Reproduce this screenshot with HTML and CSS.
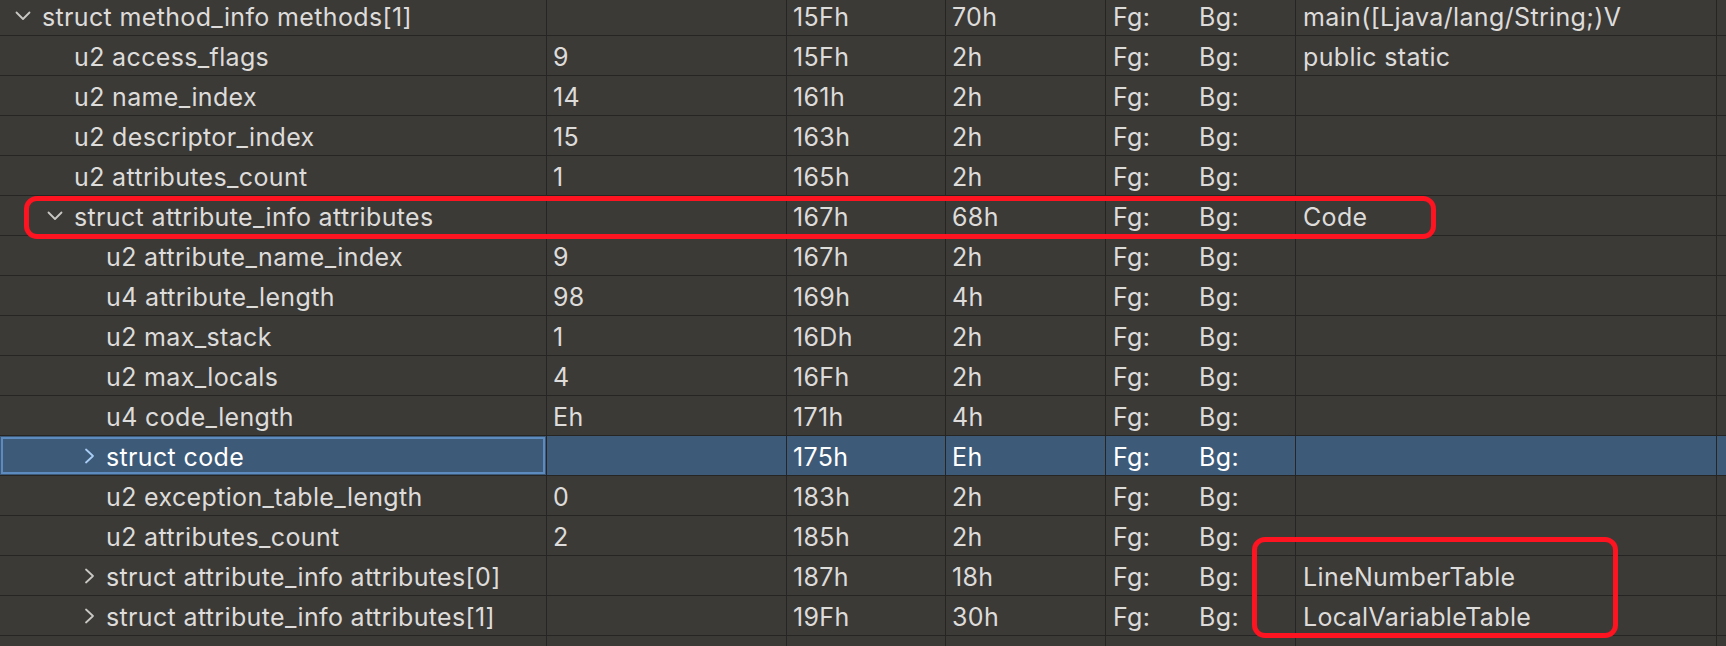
FILE: index.html
```html
<!DOCTYPE html>
<html>
<head>
<meta charset="utf-8">
<link rel="stylesheet" href="styles.css">
</head>
<body>
<div class="view">
  <div class="table">
    <div class="row">
      <div class="c name l0"><svg class="chev" viewBox="0 0 16 16"><path d="M1.5 4.5 L8 11 L14.5 4.5"/></svg><span>struct method_info methods[1]</span></div>
      <div class="c val"></div><div class="c off">15Fh</div><div class="c size">70h</div><div class="c fg">Fg:</div><div class="c bg">Bg:</div><div class="c cmt">main([Ljava/lang/String;)V</div><div class="c rest"></div>
    </div>
    <div class="row">
      <div class="c name l1"><i class="nochev"></i><span>u2 access_flags</span></div>
      <div class="c val">9</div><div class="c off">15Fh</div><div class="c size">2h</div><div class="c fg">Fg:</div><div class="c bg">Bg:</div><div class="c cmt">public static</div><div class="c rest"></div>
    </div>
    <div class="row">
      <div class="c name l1"><i class="nochev"></i><span>u2 name_index</span></div>
      <div class="c val">14</div><div class="c off">161h</div><div class="c size">2h</div><div class="c fg">Fg:</div><div class="c bg">Bg:</div><div class="c cmt"></div><div class="c rest"></div>
    </div>
    <div class="row">
      <div class="c name l1"><i class="nochev"></i><span>u2 descriptor_index</span></div>
      <div class="c val">15</div><div class="c off">163h</div><div class="c size">2h</div><div class="c fg">Fg:</div><div class="c bg">Bg:</div><div class="c cmt"></div><div class="c rest"></div>
    </div>
    <div class="row">
      <div class="c name l1"><i class="nochev"></i><span>u2 attributes_count</span></div>
      <div class="c val">1</div><div class="c off">165h</div><div class="c size">2h</div><div class="c fg">Fg:</div><div class="c bg">Bg:</div><div class="c cmt"></div><div class="c rest"></div>
    </div>
    <div class="row">
      <div class="c name l1"><svg class="chev" viewBox="0 0 16 16"><path d="M1.5 4.5 L8 11 L14.5 4.5"/></svg><span>struct attribute_info attributes</span></div>
      <div class="c val"></div><div class="c off">167h</div><div class="c size">68h</div><div class="c fg">Fg:</div><div class="c bg">Bg:</div><div class="c cmt">Code</div><div class="c rest"></div>
    </div>
    <div class="row">
      <div class="c name l2"><i class="nochev"></i><span>u2 attribute_name_index</span></div>
      <div class="c val">9</div><div class="c off">167h</div><div class="c size">2h</div><div class="c fg">Fg:</div><div class="c bg">Bg:</div><div class="c cmt"></div><div class="c rest"></div>
    </div>
    <div class="row">
      <div class="c name l2"><i class="nochev"></i><span>u4 attribute_length</span></div>
      <div class="c val">98</div><div class="c off">169h</div><div class="c size">4h</div><div class="c fg">Fg:</div><div class="c bg">Bg:</div><div class="c cmt"></div><div class="c rest"></div>
    </div>
    <div class="row">
      <div class="c name l2"><i class="nochev"></i><span>u2 max_stack</span></div>
      <div class="c val">1</div><div class="c off">16Dh</div><div class="c size">2h</div><div class="c fg">Fg:</div><div class="c bg">Bg:</div><div class="c cmt"></div><div class="c rest"></div>
    </div>
    <div class="row">
      <div class="c name l2"><i class="nochev"></i><span>u2 max_locals</span></div>
      <div class="c val">4</div><div class="c off">16Fh</div><div class="c size">2h</div><div class="c fg">Fg:</div><div class="c bg">Bg:</div><div class="c cmt"></div><div class="c rest"></div>
    </div>
    <div class="row">
      <div class="c name l2"><i class="nochev"></i><span>u4 code_length</span></div>
      <div class="c val">Eh</div><div class="c off">171h</div><div class="c size">4h</div><div class="c fg">Fg:</div><div class="c bg">Bg:</div><div class="c cmt"></div><div class="c rest"></div>
    </div>
    <div class="row selected">
      <div class="c name l2 focus"><svg class="chev right" viewBox="0 0 16 16"><path d="M7 1.5 L14 8 L7 14.5"/></svg><span>struct code</span></div>
      <div class="c val"></div><div class="c off">175h</div><div class="c size">Eh</div><div class="c fg">Fg:</div><div class="c bg">Bg:</div><div class="c cmt"></div><div class="c rest"></div>
    </div>
    <div class="row">
      <div class="c name l2"><i class="nochev"></i><span>u2 exception_table_length</span></div>
      <div class="c val">0</div><div class="c off">183h</div><div class="c size">2h</div><div class="c fg">Fg:</div><div class="c bg">Bg:</div><div class="c cmt"></div><div class="c rest"></div>
    </div>
    <div class="row">
      <div class="c name l2"><i class="nochev"></i><span>u2 attributes_count</span></div>
      <div class="c val">2</div><div class="c off">185h</div><div class="c size">2h</div><div class="c fg">Fg:</div><div class="c bg">Bg:</div><div class="c cmt"></div><div class="c rest"></div>
    </div>
    <div class="row">
      <div class="c name l2"><svg class="chev" viewBox="0 0 16 16"><path d="M7 1.5 L14 8 L7 14.5"/></svg><span>struct attribute_info attributes[0]</span></div>
      <div class="c val"></div><div class="c off">187h</div><div class="c size">18h</div><div class="c fg">Fg:</div><div class="c bg">Bg:</div><div class="c cmt">LineNumberTable</div><div class="c rest"></div>
    </div>
    <div class="row">
      <div class="c name l2"><svg class="chev" viewBox="0 0 16 16"><path d="M7 1.5 L14 8 L7 14.5"/></svg><span>struct attribute_info attributes[1]</span></div>
      <div class="c val"></div><div class="c off">19Fh</div><div class="c size">30h</div><div class="c fg">Fg:</div><div class="c bg">Bg:</div><div class="c cmt">LocalVariableTable</div><div class="c rest"></div>
    </div>
    <div class="row">
      <div class="c name"></div><div class="c val"></div><div class="c off"></div><div class="c size"></div><div class="c fg"></div><div class="c bg"></div><div class="c cmt"></div><div class="c rest"></div>
    </div>
  </div>
  <div class="mark mark-code"></div>
  <div class="mark mark-tables"></div>
</div>
</body>
</html>
```

FILE: styles.css
```css
html, body {
  margin: 0;
  padding: 0;
  background: #3c3a37;
  overflow: hidden;
}
.view {
  position: relative;
  width: 1726px;
  height: 646px;
  overflow: hidden;
  font-family: Inter, "Noto Sans", "Liberation Sans", sans-serif;
  font-size: 25px;
  letter-spacing: 0.35px;
  color: #dddcda;
}
.table {
  margin-top: -4px;
}
.row {
  display: grid;
  grid-template-columns: 547px 240px 159px 160px 84px 106px 421px 1fr;
  height: 40px;
  border-bottom: 1px solid #262523;
  box-sizing: border-box;
}
.row:last-child { border-bottom: none; }
.c {
  display: flex;
  align-items: center;
  box-sizing: border-box;
  border-right: 1px solid #262523;
  padding-left: 6px;
  padding-top: 3px;
  white-space: nowrap;
  overflow: hidden;
}
.c.fg { border-right: none; padding-left: 7px; }
.c.bg { padding-left: 9px; }
.c.cmt { padding-left: 7px; }
.c.rest { border-right: none; }
.c.name { padding-left: 15px; }
.c.name.l1 { padding-left: 47px; }
.c.name.l2 { padding-left: 79px; }
.chev, .nochev {
  width: 16px;
  height: 16px;
  flex: none;
  margin-right: 11px;
  margin-top: -2px;
}
.nochev { display: block; }
.chev path {
  fill: none;
  stroke: #c9c8c5;
  stroke-width: 1.8;
  stroke-linecap: round;
  stroke-linejoin: round;
}
.row.selected {
  background: #3d5a79;
  color: #ffffff;
}
.row.selected .chev path { stroke: #a9cdf5; }
.c.focus {
  box-shadow: inset 0 0 0 1px #3d5a79, inset 0 0 0 3px #5d8bbf;
}
.mark {
  position: absolute;
  border: 5px solid #fe1320;
  border-radius: 13px;
  box-sizing: border-box;
}
.mark-code {
  left: 24px;
  top: 196px;
  width: 1412px;
  height: 43px;
}
.mark-tables {
  left: 1252px;
  top: 537px;
  width: 366px;
  height: 101px;
}
```
